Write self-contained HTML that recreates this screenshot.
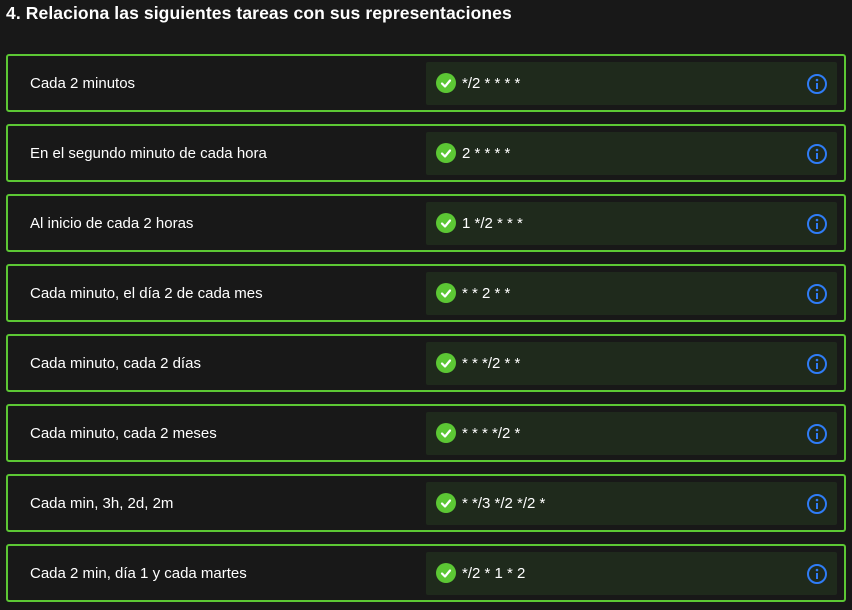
<!DOCTYPE html>
<html><head><style>
body{margin:0;background:#181818;width:852px;height:610px;overflow:hidden;font-family:"Liberation Sans",sans-serif;color:#fff}
h1{position:absolute;left:6px;top:3px;margin:0;font-size:17.5px;font-weight:bold;letter-spacing:0.1px}
.row{position:absolute;left:6px;width:836px;height:54px;border:2px solid #5cc734;border-radius:3px;box-sizing:content-box}
.lab{position:absolute;left:22px;top:19px;font-size:15px}
.pan{position:absolute;left:418px;top:6px;width:411px;height:43px;background:#1f2a1c;border-radius:2px}
.ck{position:absolute;left:10px;top:11px;width:20px;height:20px;border-radius:50%;background:#5cc734}
.val{position:absolute;left:36px;top:13px;font-size:15px}
.inf{position:absolute;left:380px;top:11px}
</style></head><body>
<h1>4. Relaciona las siguientes tareas con sus representaciones</h1>
<div id="c"></div>
<script>
var d=[["Cada 2 minutos","*/2 * * * *"],["En el segundo minuto de cada hora","2 * * * *"],["Al inicio de cada 2 horas","1 */2 * * *"],["Cada minuto, el día 2 de cada mes","* * 2 * *"],["Cada minuto, cada 2 días","* * */2 * *"],["Cada minuto, cada 2 meses","* * * */2 *"],["Cada min, 3h, 2d, 2m","* */3 */2 */2 *"],["Cada 2 min, día 1 y cada martes","*/2 * 1 * 2"]];
var h="";d.forEach(function(r,i){h+='<div class="row" style="top:'+(54+i*70)+'px"><div class="lab">'+r[0]+'</div><div class="pan"><div class="ck"><svg width="20" height="20"><path d="M6 10.5l3 3 5-6" stroke="#fff" stroke-width="2.2" fill="none" stroke-linecap="round" stroke-linejoin="round"/></svg></div><div class="val">'+r[1]+'</div><svg class="inf" width="22" height="22"><circle cx="11" cy="11" r="9" stroke="#2f7cf6" stroke-width="2" fill="none"/><circle cx="11" cy="7" r="1.3" fill="#2f7cf6"/><path d="M11 10v6" stroke="#2f7cf6" stroke-width="2"/></svg></div></div>';});
document.getElementById("c").innerHTML=h;
</script>
</body></html>
